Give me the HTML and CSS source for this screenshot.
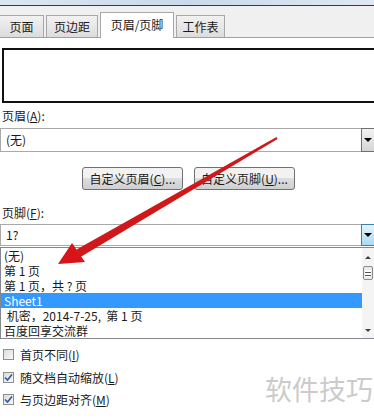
FILE: index.html
```html
<!DOCTYPE html>
<html lang="zh-CN">
<head>
  <meta charset="UTF-8" />
  <title>页面设置</title>
  <link rel="stylesheet" href="styles.css">
</head>
<body>
  <div class="titlebar"></div>

  <div class="tabstrip">
    <div class="tab" style="width: 44px">页面</div>
    <div class="tab" style="width: 52px">页边距</div>
    <div class="tab active" style="width: 74px">页眉/页脚</div>
    <div class="tab" style="width: 49px">工作表</div>
  </div>

  <div class="panel">
    <div class="preview"></div>

    <div class="label">页眉(<u>A</u>):</div>
    <div class="combo">
      <span class="combo-text">(无)</span>
      <span class="drop"><span class="tri"></span></span>
    </div>

    <div class="buttons">
      <div class="btn">自定义页眉(<u>C</u>)...</div>
      <div class="btn">自定义页脚(<u>U</u>)...</div>
    </div>

    <div class="label footer-label">页脚(<u>F</u>):</div>
    <div class="combo short">
      <span class="combo-text">1?</span>
      <span class="drop hot"><span class="tri"></span></span>
    </div>
    <div class="list">
      <div class="items">
        <div class="item">(无)</div>
        <div class="item">第 1 页</div>
        <div class="item">第 1 页，共 ? 页</div>
        <div class="item selected">Sheet1</div>
        <div class="item">&nbsp;机密，2014-7-25,&nbsp; 第 1 页</div>
        <div class="item">百度回享交流群</div>
      </div>
      <div class="scrollbar">
        <span class="arrow up"></span>
        <span class="thumb"></span>
        <span class="arrow down"></span>
      </div>
    </div>

    <div class="checks">
      <div class="check">
        <span class="box"></span>
        <span>首页不同(<u>I</u>)</span>
      </div>
      <div class="check">
        <span class="box"><svg width="9" height="9" viewBox="0 0 9 9"><path d="M1 4.5 L3.5 7 L8 1.5" fill="none" stroke="#2a5aa8" stroke-width="1.6"/></svg></span>
        <span>随文档自动缩放(<u>L</u>)</span>
      </div>
      <div class="check">
        <span class="box"><svg width="9" height="9" viewBox="0 0 9 9"><path d="M1 4.5 L3.5 7 L8 1.5" fill="none" stroke="#2a5aa8" stroke-width="1.6"/></svg></span>
        <span>与页边距对齐(<u>M</u>)</span>
      </div>
    </div>
  </div>

  <div class="watermark">软件技巧</div>

  <svg class="pointer" width="374" height="418" viewBox="0 0 374 418">
    <defs>
      <linearGradient id="red" x1="0" y1="0" x2="1" y2="1">
        <stop offset="0" stop-color="#e02020"/>
        <stop offset="1" stop-color="#c00e14"/>
      </linearGradient>
    </defs>
    <polygon points="277.5,138.9 276.5,137.1 76.5,249.5 80.5,257" fill="url(#red)"/>
    <polygon points="58,264 72,243 85,262" fill="#d8141a"/>
  </svg>
</body>
</html>
```

FILE: styles.css
```css
body {
  margin: 0;
  width: 374px;
  height: 418px;
  overflow: hidden;
  position: relative;
  background: #ffffff;
  font-family: "Noto Sans CJK SC", "Noto Sans", sans-serif;
  font-size: 12px;
  color: #1a1a1a;
}

u {
  text-decoration: underline;
}

.titlebar {
  height: 5px;
  background: linear-gradient(to right, #dce6f0, #c9daea, #dfe8f2);
  border-bottom: 1px solid #3b3b3b;
}

.tabstrip {
  display: flex;
  align-items: flex-end;
  gap: 2px;
  height: 31px;
  background: #f0f0f0;
  border-bottom: 1px solid #a0a0a0;
}

.tab {
  height: 22px;
  line-height: 22px;
  text-align: center;
  font-size: 12px;
  background: linear-gradient(#f2f2f2, #dcdcdc);
  border: 1px solid #a8a8a8;
  border-bottom: none;
  box-sizing: border-box;
}

.tab:first-child {
  border-left: none;
}

.tab.active {
  height: 26px;
  line-height: 24px;
  background: #ffffff;
  margin-bottom: -1px;
}

.panel {
  padding-top: 10px;
}

.preview {
  height: 51px;
  margin-left: 2px;
  border: 2px solid #111111;
  border-right: none;
}

.label {
  margin: 4px 0 0 2px;
  height: 18px;
  line-height: 18px;
}

.footer-label {
  margin-top: 14px;
}

.combo {
  display: flex;
  align-items: center;
  height: 24px;
  margin-top: 3px;
  border: 1px solid #a9a9a9;
  border-right: none;
  box-sizing: border-box;
}

.combo.short {
  height: 22px;
  margin-top: 2px;
}

.combo-text {
  flex: 1;
  padding-left: 5px;
  line-height: 20px;
}

.drop {
  width: 13px;
  height: calc(100% + 2px);
  border: 1px solid #707070;
  border-right: none;
  box-sizing: border-box;
  background: linear-gradient(#f2f2f2, #d6d6d6);
  display: flex;
  align-items: center;
  justify-content: center;
}

.drop.hot {
  border-color: #3c7fb1;
  background: linear-gradient(#e6f4fc, #a9d9f4);
}

.tri {
  width: 0;
  height: 0;
  border-left: 4px solid transparent;
  border-right: 4px solid transparent;
  border-top: 4px solid #000000;
}

.buttons {
  display: flex;
  gap: 11px;
  margin: 15px 0 0 82px;
}

.btn {
  width: 101px;
  height: 23px;
  line-height: 21px;
  text-align: center;
  border: 1px solid #707070;
  border-radius: 3px;
  box-sizing: border-box;
  background: linear-gradient(#f2f2f2 50%, #dddddd 50%, #cfcfcf);
}

.list {
  display: flex;
  height: 92px;
  margin-top: 1px;
  border: 1px solid #828790;
  border-right: none;
  box-sizing: border-box;
}

.items {
  flex: 1;
}

.item {
  height: 15px;
  line-height: 15px;
  padding-left: 3px;
  white-space: nowrap;
}

.item.selected {
  background: #3399ff;
  color: #ffffff;
}

.scrollbar {
  width: 12px;
  background: #f4f4f4;
  display: flex;
  flex-direction: column;
  align-items: center;
  padding: 8px 0 6px;
}

.arrow {
  width: 0;
  height: 0;
  border-left: 3px solid transparent;
  border-right: 3px solid transparent;
}

.arrow.up {
  border-bottom: 3px solid #404040;
}

.arrow.down {
  border-top: 3px solid #404040;
  margin-top: auto;
}

.thumb {
  width: 10px;
  height: 14px;
  margin-top: 7px;
  border: 1px solid #8a8a8a;
  border-radius: 2px;
  box-sizing: border-box;
  background: repeating-linear-gradient(#ffffff 0 2px, #555555 2px 3px) center / 6px 7px no-repeat, #eaeaea;
}

.checks {
  margin-top: 7px;
  display: flex;
  flex-direction: column;
  gap: 5.5px;
}

.check {
  display: flex;
  align-items: center;
  gap: 6px;
  height: 17px;
  padding-left: 3px;
}

.box {
  width: 11px;
  height: 11px;
  border: 1px solid #8e8f8f;
  box-sizing: border-box;
  background: linear-gradient(135deg, #dcdcdc, #f8f8f8);
  display: flex;
  align-items: center;
  justify-content: center;
}

.watermark {
  position: absolute;
  left: 265px;
  top: 375px;
  font-size: 27px;
  line-height: 28px;
  color: #cbcbcb;
}

.pointer {
  position: absolute;
  left: 0;
  top: 0;
}
```
